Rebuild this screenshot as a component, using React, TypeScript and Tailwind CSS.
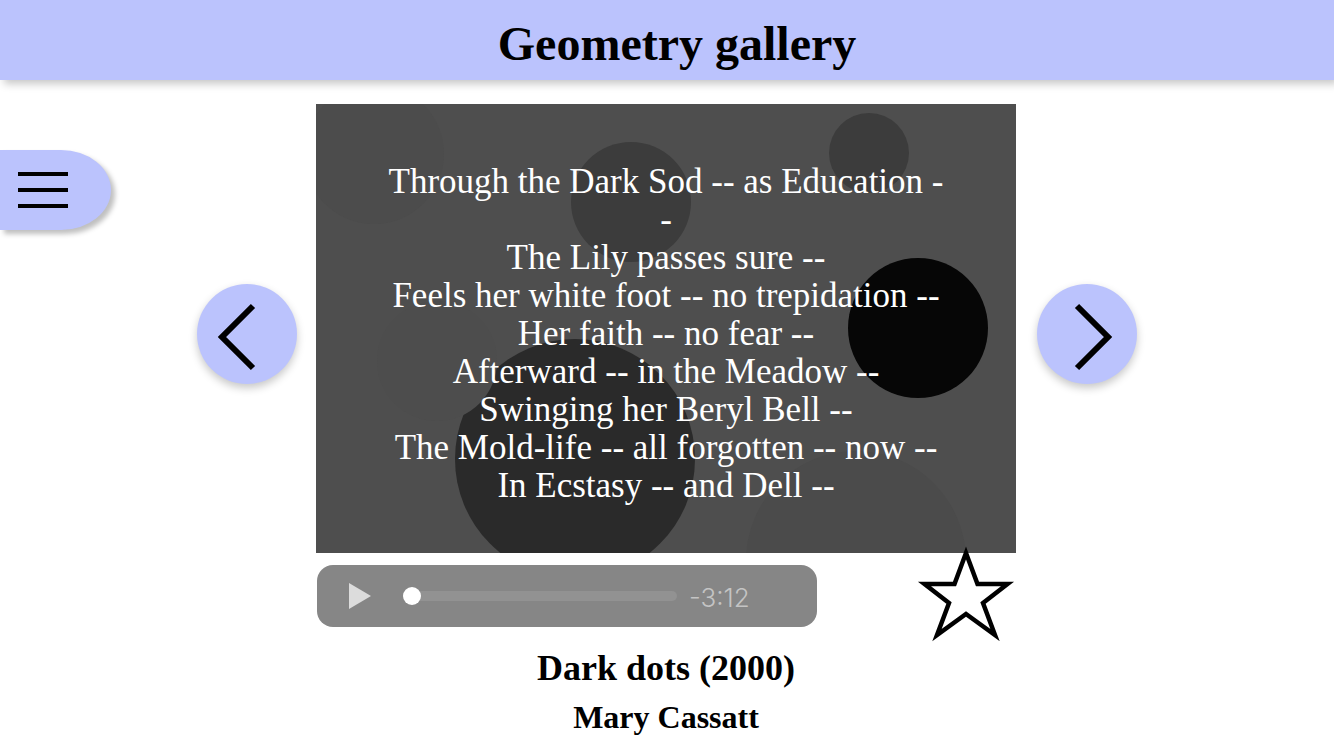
import { useState } from "react";

const poem = [
  "Through the Dark Sod -- as Education -",
  "-",
  "The Lily passes sure --",
  "Feels her white foot -- no trepidation --",
  "Her faith -- no fear --",
  "Afterward -- in the Meadow --",
  "Swinging her Beryl Bell --",
  "The Mold-life -- all forgotten -- now --",
  "In Ecstasy -- and Dell --",
];

function Painting() {
  return (
    <svg
      viewBox="0 0 700 449"
      preserveAspectRatio="xMidYMid slice"
      className="col-start-1 row-start-1 h-full w-full"
      aria-hidden="true"
    >
      <rect width="700" height="449" fill="#4e4e4e" />
      <circle cx="58" cy="50" r="70" fill="#4c4c4c" />
      <circle cx="540" cy="457" r="110" fill="#4b4b4b" />
      <circle cx="315" cy="98" r="60" fill="#3c3c3c" />
      <circle cx="553" cy="49" r="40" fill="#3c3c3c" />
      <circle cx="259" cy="355" r="120" fill="#2a2a2a" />
      <circle cx="121" cy="257" r="60" fill="#4d4d4d" />
      <circle cx="602" cy="224" r="70" fill="#060606" />
    </svg>
  );
}

function ArrowButton({ label, points }: { label: string; points: string }) {
  return (
    <button
      type="button"
      aria-label={label}
      className="size-[100px] shrink-0 rounded-full bg-[#bbc3fd] shadow-[0_4px_8px_rgba(0,0,0,0.22)]"
    >
      <svg viewBox="0 0 100 100" className="size-full" fill="none" stroke="#000" strokeWidth="6">
        <polyline points={points} />
      </svg>
    </button>
  );
}

export default function App() {
  const [position, setPosition] = useState(0);

  return (
    <div className="min-h-screen bg-white font-['Liberation_Serif',serif] text-black">
      <header className="flex h-20 items-center justify-center bg-[#bbc3fd] pt-2 pl-5 shadow-[4px_4px_8px_rgba(0,0,0,0.22)]">
        <h1 className="text-[48px] leading-none font-bold">Geometry gallery</h1>
      </header>

      <div className="grid grid-cols-[1fr_minmax(0,700px)_1fr] pr-0.5">
        <div className="flex flex-col gap-[54px] pt-[70px]">
          <button
            type="button"
            aria-label="Menu"
            className="flex h-20 w-[111px] flex-col justify-center gap-3 rounded-r-[50px_40px] bg-[#bbc3fd] pl-[18px] shadow-[4px_4px_5px_rgba(0,0,0,0.25)]"
          >
            <span className="h-1 w-[50px] bg-black" />
            <span className="h-1 w-[50px] bg-black" />
            <span className="h-1 w-[50px] bg-black" />
          </button>
          <div className="flex justify-end pr-[19px]">
            <ArrowButton label="Previous artwork" points="56,22 25,53 56,84" />
          </div>
        </div>

        <main className="pt-6">
          <div className="grid">
            <Painting />
            <div className="col-start-1 row-start-1 pt-[59px] pb-12 text-center text-[35px] leading-[38px] text-white">
              {poem.map((line) => (
                <p key={line}>{line}</p>
              ))}
            </div>
          </div>

          <div className="flex justify-between pl-px">
            <div className="mt-3 flex h-[62px] w-[500px] items-center rounded-2xl bg-[#868686] pl-8">
              <button type="button" aria-label="Play">
                <svg width="22" height="26" viewBox="0 0 22 26" fill="#dcdcdc">
                  <path d="M0 0L22 13L0 26Z" />
                </svg>
              </button>
              <input
                type="range"
                aria-label="Playback position"
                min={0}
                max={192}
                value={position}
                onChange={(e) => setPosition(Number(e.target.value))}
                className="ml-8 h-[10px] w-[274px] appearance-none rounded-full bg-[#929292] [&::-webkit-slider-thumb]:size-[18px] [&::-webkit-slider-thumb]:appearance-none [&::-webkit-slider-thumb]:rounded-full [&::-webkit-slider-thumb]:bg-white"
              />
              <span className="ml-3 pt-0.5 font-['Inter',sans-serif] text-[26px] font-light text-[#c4c4c4]">-3:12</span>
            </div>
            <button type="button" aria-label="Add to favourites" className="-mt-2 h-24 w-[98px]">
              <svg viewBox="0 0 98 96" className="size-full overflow-visible" fill="#fff" stroke="#000" strokeWidth="4.5">
                <path d="M48 8L59.5 39L89.5 39L65 58L77 90L48 69L19 90L31 58L6.500 39L36.500 39Z" />
              </svg>
            </button>
          </div>

          <div className="text-center font-bold">
            <h2 className="text-4xl leading-[54px]">Dark dots (2000)</h2>
            <p className="text-[32px] leading-[44px]">Mary Cassatt</p>
          </div>
        </main>

        <div className="pt-[204px] pl-[21px]">
          <ArrowButton label="Next artwork" points="40,22 71,53 40,84" />
        </div>
      </div>
    </div>
  );
}
